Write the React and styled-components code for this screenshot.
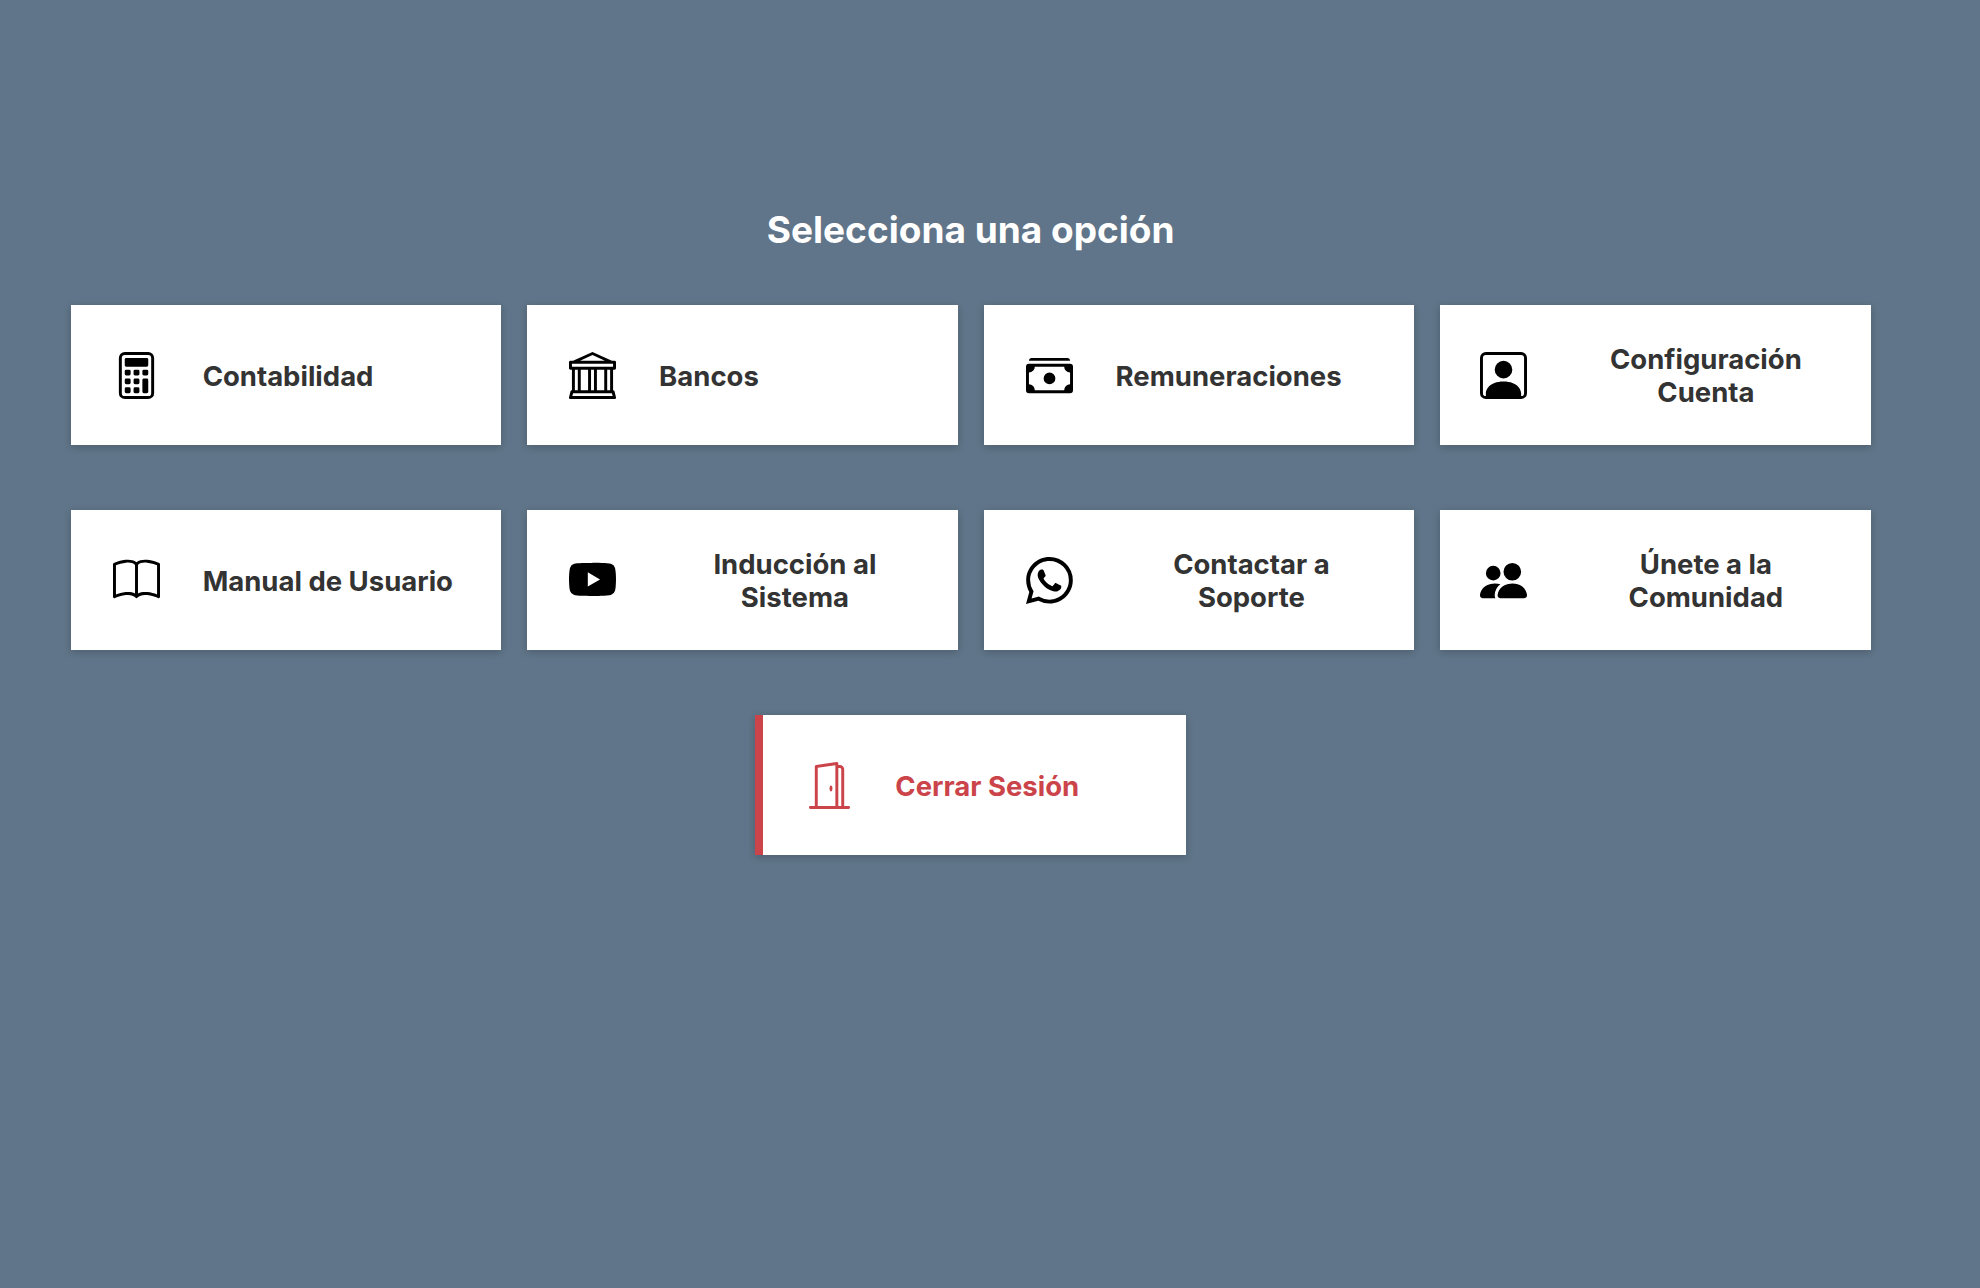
import React from 'react';
import styled, { createGlobalStyle } from 'styled-components';
import {
  BsCalculator,
  BsBank,
  BsCashStack,
  BsPersonSquare,
  BsBook,
  BsYoutube,
  BsWhatsapp,
  BsPeopleFill,
  BsDoorOpen
} from 'react-icons/bs';

const GlobalStyle = createGlobalStyle`
  html, body {
    margin: 0;
    padding: 0;
    background-color: #607589;
    font-family: Inter, "Liberation Sans", sans-serif;
  }
`
const Page = styled.div`
  box-sizing: border-box;
  width: 1980px;
  height: 1288px;
  padding: 205px 109.3px 0 70.6px;
`
const Title = styled.h1`
  margin: 0 0 50px;
  height: 50px;
  line-height: 50px;
  font-size: 37px;
  font-weight: 700;
  color: #fff;
  text-align: center;
`
const Options = styled.div`
  display: flex;
  flex-wrap: wrap;
  justify-content: center;
  gap: 65px 25.9px;
`
const IconBox = styled.span`
  flex: none;
  display: flex;
  justify-content: center;
  width: 48px;
  margin-right: ${ props => props.$danger ? '41.8px' : '42.5px' };
  font-size: 47px;
  color: ${ props => props.$danger ? '#cb444a' : '#000' };
`
const Card = styled.a`
  box-sizing: border-box;
  display: flex;
  align-items: center;
  width: 430.6px;
  height: 140px;
  padding: 0 27px 0 ${ props => props.$danger ? '42.2px' : '41.5px' };
  background-color: #fff;
  border-left: ${ props => props.$danger ? '8px solid #cb444a' : 'none' };
  box-shadow: 0 2px 8px rgba(0, 0, 0, 0.2);
  color: ${ props => props.$danger ? '#cb444a' : '#333' };
  cursor: pointer;
  &:nth-child(4n) {
    padding: 0 31px 0 39.5px;
  }
  &:nth-child(4n) ${ IconBox } {
    margin-right: 44.5px;
  }
`
const Label = styled.span`
  flex: ${ props => props.$twoLines ? 1 : 'none' };
  padding-top: 2px;
  font-size: 27.5px;
  font-weight: 700;
  line-height: 33px;
  text-align: center;
  white-space: pre-line;
`

const options = [
  { label: 'Contabilidad', icon: BsCalculator },
  { label: 'Bancos', icon: BsBank },
  { label: 'Remuneraciones', icon: BsCashStack },
  { label: 'Configuración\nCuenta', icon: BsPersonSquare },
  { label: 'Manual de Usuario', icon: BsBook },
  { label: 'Inducción al\nSistema', icon: BsYoutube },
  { label: 'Contactar a\nSoporte', icon: BsWhatsapp },
  { label: 'Únete a la\nComunidad', icon: BsPeopleFill },
  { label: 'Cerrar Sesión', icon: BsDoorOpen, danger: true }
]

export default function App() {
  return (
    <Page>
      <GlobalStyle />
      <Title>Selecciona una opción</Title>
      <Options>
        { options.map(({ label, icon: Icon, danger }) => (
          <Card key={ label } $danger={ danger }>
            <IconBox $danger={ danger }>
              <Icon />
            </IconBox>
            <Label $twoLines={ label.includes('\n') }>{ label }</Label>
          </Card>
        )) }
      </Options>
    </Page>
  )
}
